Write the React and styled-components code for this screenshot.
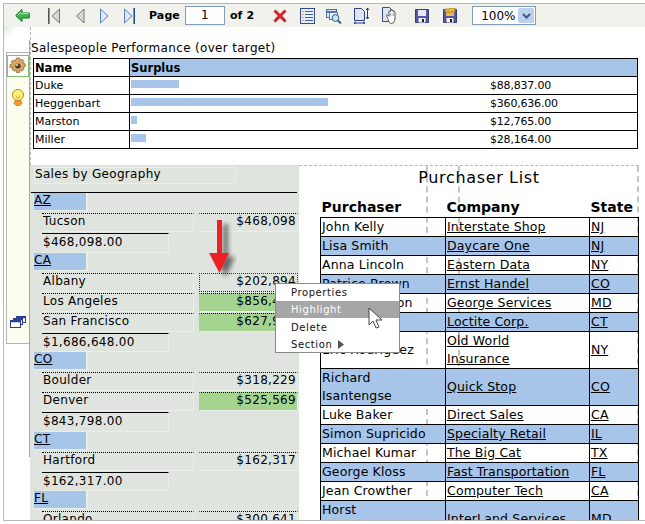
import React from 'react'
import styled, { createGlobalStyle } from 'styled-components'

const GlobalStyle = createGlobalStyle`
  html, body { margin: 0; padding: 0; background: #fff; }
  body { font-family: "DejaVu Sans", Verdana, sans-serif; font-size: 12px; color: #000; }
`

const blue = '#a6c5e8'

const Frame = styled.div`
  position: relative;
  box-sizing: border-box;
  width: 642px;
  height: 518px;
  margin: 3px 0 0 3px;
  border-top: 1px solid #b8b8b8;
  border-bottom: 1px solid #b8b8b8;
  border-left: 1px solid #b8b8b8;
  overflow: hidden;
`

const Toolbar = styled.div`
  display: flex;
  align-items: center;
  height: 23px;
  background: #f1f2ec;
`

const Tool = styled.svg`
  flex: none;
  margin-left: ${p => p.$ml}px;
`

const PageLabel = styled.span`
  font-weight: bold;
  font-size: 11px;
  letter-spacing: 0.1px;
  margin-left: ${p => p.$ml}px;
`

const PageInput = styled.div`
  box-sizing: border-box;
  width: 40px;
  height: 19px;
  margin-left: 5px;
  border: 1px solid #7f9db9;
  background: #fff;
  text-align: center;
  line-height: 17px;
  font-size: 12px;
`

const ZoomSelect = styled.div`
  box-sizing: border-box;
  display: flex;
  align-items: center;
  justify-content: space-between;
  width: 64px;
  height: 19px;
  margin-left: 15px;
  padding: 0 1px 0 8px;
  border: 1px solid #7f9db9;
  background: #fff;
  font-size: 12px;
`

const ZoomArrow = styled.span`
  display: flex;
  align-items: center;
  justify-content: center;
  width: 16px;
  height: 15px;
  border-radius: 2px;
  background: #bdd0ec;
`

const Body = styled.div`
  display: flex;
  align-items: flex-start;
  background: linear-gradient(135deg, #dcead6 0, #fff 10px) no-repeat 0 0 / 12px 12px;
`

const Rail = styled.div`
  box-sizing: border-box;
  flex: none;
  width: 26px;
  height: 417px;
  margin-top: 13px;
  padding: 12px 0 0 2px;
  border-right: 1px solid #a8a8a8;
`

const Sidebar = styled.div`
  box-sizing: border-box;
  display: flex;
  flex-direction: column;
  align-items: center;
  width: 23px;
  height: 292px;
  padding-top: 2px;
  background: #fdfdf0;
  border: 1px solid #b4b4b4;
  border-right: none;
`

const SideButton = styled.div`
  box-sizing: border-box;
  display: flex;
  align-items: center;
  justify-content: center;
  width: 22px;
  height: 22px;
  margin-top: ${p => p.$mt || 0}px;
  border: ${p => (p.$active ? '1px solid #7fc06a' : 'none')};
  background: ${p => (p.$active ? '#fff' : 'transparent')};
`

const Report = styled.div`
  flex: 1;
  min-width: 0;
`

const Perf = styled.section`
  box-sizing: border-box;
  height: 138px;
  padding-top: 13px;
  border-left: 1px dashed #b8b8b8;
`

const PerfTitle = styled.div`
  height: 18px;
  line-height: 16px;
  font-size: 12px;
  letter-spacing: 0.32px;
`

const PerfTable = styled.table`
  width: 605px;
  margin-left: 2px;
  border-collapse: collapse;
  table-layout: fixed;
  font-size: 11px;
  & th, & td {
    height: 17px;
    padding: 0 1px;
    border: 1px solid #000;
    text-align: left;
    line-height: 14px;
  }
  & th {
    font-size: 11.5px;
  }
`

const SurplusHead = styled.th`
  background: ${blue};
`

const SurplusCell = styled.div`
  display: flex;
  align-items: flex-start;
  height: 17px;
`

const BarTrack = styled.div`
  width: 359px;
  flex: none;
  padding-top: 3px;
`

const Bar = styled.div`
  height: 8px;
  background: ${blue};
`

const Amount = styled.span`
  line-height: 17px;
  letter-spacing: -0.2px;
`

const Lower = styled.div`
  display: flex;
  align-items: flex-start;
`

const Geo = styled.section`
  box-sizing: border-box;
  flex: none;
  width: 269px;
  height: 356px;
  padding-top: 1px;
  background: #dfe5de;
  border-top: 1px solid #ddd;
  letter-spacing: 0.3px;
  overflow: hidden;
`

const GeoTitle = styled.div`
  box-sizing: border-box;
  width: 202px;
  height: 17px;
  margin-left: 4px;
  border: 1px solid #eaeee8;
  line-height: 13px;
  font-size: 12px;
`

const GeoRule = styled.div`
  height: 1px;
  margin: 8px 2px 0 1px;
  background: #000;
`

const StateBox = styled.div`
  box-sizing: border-box;
  width: 54px;
  height: 18px;
  margin: 0 0 2px 4px;
  border-right: 2px solid #eaeee8;
  border-bottom: 1px solid #eaeee8;
  background: ${blue};
  line-height: 15px;
  text-decoration: underline;
  font-size: 12px;
`

const CityRow = styled.div`
  display: flex;
  height: 20px;
  margin-left: 12px;
`

const CityCell = styled.div`
  box-sizing: border-box;
  flex: none;
  width: 152px;
  height: 19px;
  padding-left: 1px;
  border-top: 1px dotted #000;
  border-right: 1px solid #eaeee8;
  border-bottom: 1px solid #eaeee8;
  line-height: 15px;
`

const ValueCell = styled.div`
  box-sizing: border-box;
  flex: none;
  width: 99px;
  height: 19px;
  margin-left: 5px;
  padding-right: 1px;
  text-align: right;
  line-height: 15px;
  border-top: 1px dotted ${p => (p.$marked ? '#7a1020' : '#000')};
  border-right: 1px ${p => (p.$marked ? 'dotted #7a1020' : 'solid #eaeee8')};
  border-left: 1px ${p => (p.$marked ? 'dotted #7a1020' : 'solid transparent')};
  border-bottom: 1px ${p => (p.$marked ? 'dotted #7a1020' : 'solid #eaeee8')};
  background: ${p => (p.$hot ? '#a5d490' : 'transparent')};
`

const TotalCell = styled.div`
  box-sizing: border-box;
  width: 127px;
  height: 19.5px;
  margin-left: 12px;
  padding-left: 1px;
  border-top: 1px solid #000;
  border-right: 1px solid #eaeee8;
  border-bottom: 1px solid #eaeee8;
  line-height: 16px;
`

const List = styled.section`
  position: relative;
  flex: none;
  width: 340px;
  height: 356px;
  border-top: 1px dashed #b8b8b8;
`

const Guide = styled.div`
  position: absolute;
  top: 0;
  left: ${p => p.$x}px;
  height: ${p => p.$h}px;
  border-left: 2px dashed #c4c4c4;
`

const ListTitle = styled.h2`
  position: relative;
  margin: 0;
  height: 25px;
  padding-left: 20px;
  font-size: 16px;
  font-weight: normal;
  letter-spacing: 0.65px;
  line-height: 24px;
  text-align: center;
`

const ListTable = styled.table`
  position: relative;
  width: 319px;
  margin-left: 21px;
  border-collapse: collapse;
  table-layout: fixed;
  font-size: 12.5px;
  letter-spacing: 0.15px;
  & th {
    height: 24px;
    padding: 0 1px 2px;
    font-size: 14px;
    letter-spacing: 0;
    text-align: left;
    vertical-align: bottom;
    line-height: 16px;
  }
  & td {
    padding: 0 1px;
    border: 1px solid #000;
    line-height: 18px;
  }
`

const ListRow = styled.tr`
  background: ${p => (p.$shade ? blue : 'transparent')};
`

const Linked = styled.a`
  color: #000;
  text-decoration: underline;
`

const Menu = styled.div`
  position: absolute;
  left: 271px;
  top: 279px;
  box-sizing: border-box;
  width: 125px;
  height: 70px;
  background: #fff;
  border: 1px solid #8a8a8a;
  font-size: 10px;
  letter-spacing: 0.6px;
`

const MenuItem = styled.div`
  display: flex;
  align-items: center;
  gap: 6px;
  height: 17px;
  margin-top: ${p => p.$mt || 0}px;
  padding-left: 15px;
  background: ${p => (p.$active ? '#a6a6a6' : 'transparent')};
  color: ${p => (p.$active ? '#fff' : '#111')};
`

const Overlay = styled.svg`
  position: absolute;
  left: ${p => p.$x}px;
  top: ${p => p.$y}px;
`

const BackIcon = () => (
  <Tool $ml={11} width="15" height="13" viewBox="0 0 15 13">
    <path d="M7 .5 .7 6.5 7 12.5V9h7.3V4H7z" fill="#3fb54a" stroke="#0f7a2a" />
    <path d="M6 3 2.600 6.400M6 4.600h7.600" stroke="#b4ecaa" fill="none" />
  </Tool>
)

const NavIcon = ({ ml, dir, bar, on }) => {
  const line = on ? '#5b82b8' : '#777'
  const fill = on ? '#dfeafa' : '#d8d8d8'
  const barColor = on ? '#1f4f96' : '#555'
  const tri = dir === 'left' ? 'M9 1 1.500 8 9 15z' : 'M1.500 1 9 8 1.500 15z'
  return (
    <Tool $ml={ml} width={bar ? 12 : 10} height="16" viewBox={bar ? '0 0 12 16' : '0 0 10 16'}>
      {bar && dir === 'left' && <rect x="0" y="0" width="1.600" height="16" fill={barColor} />}
      <g transform={bar && dir === 'left' ? 'translate(2.500 0)' : ''}>
        <path d={tri} fill={fill} stroke={line} />
      </g>
      {bar && dir === 'right' && <rect x="10.400" y="0" width="1.600" height="16" fill={barColor} />}
    </Tool>
  )
}

const CloseIcon = () => (
  <Tool $ml={19} width="14" height="14" viewBox="0 0 14 14">
    <path d="M1.500 1.500 12.500 12.500M12.500 1.500 1.500 12.500" stroke="#d8232a" strokeWidth="3" />
    <path d="M4 7.500 1.800 12.800M10 7.500 12.500 12.800" stroke="#8a2a2a" strokeWidth="1" opacity=".6" />
  </Tool>
)

const OutlineIcon = () => (
  <Tool $ml={13} width="15" height="16" viewBox="0 0 15 16">
    <rect x=".5" y=".5" width="14" height="15" fill="#e9effa" stroke="#2f4f9e" />
    <path d="M5 3.500h8M5 6.500h8M5 9.500h8M5 12.500h8" stroke="#3e62b0" />
    <path d="M2 3.500h1.500M2 6.500h1.500M2 9.500h1.500M2 12.500h1.500" stroke="#e2742b" />
  </Tool>
)

const SearchTableIcon = () => (
  <Tool $ml={11} width="16" height="16" viewBox="0 0 16 16">
    <rect x=".5" y="1.500" width="10" height="8" fill="#dfe8f5" stroke="#4a6da8" />
    <path d="M.5 4h10" stroke="#4a6da8" strokeWidth="2" />
    <rect x="3.500" y="4.500" width="8" height="7" fill="#eef3fb" stroke="#5c7fb6" />
    <circle cx="9.500" cy="10" r="3.400" fill="#cfe2f5" stroke="#2e5f90" />
    <path d="M12 12.500 15 15.500" stroke="#2e5f90" strokeWidth="2" />
  </Tool>
)

const PageSizeIcon = () => (
  <Tool $ml={12} width="16" height="16" viewBox="0 0 16 16">
    <path d="M.5 .5h7l3 3v9H.5z" fill="#dfe4f2" stroke="#2f3f8e" />
    <path d="M13.500 0v11M12 2l1.500-2L15 2M12 9l1.500 2L15 9M0 15h11M2 13.800 0 15l2 1.200M9 13.800 11 15l-2 1.200" fill="none" stroke="#2f3f8e" />
  </Tool>
)

const HandIcon = () => (
  <Tool $ml={12} width="16" height="17" viewBox="0 0 16 17">
    <path d="M.5 .5h7l3 3v11H.5z" fill="#dfe3f2" stroke="#3a4a8e" />
    <path d="M5.500 10.500 4.500 9c-.5-1 .8-1.500 1.500-.7l1 1V4.500c0-1 1.500-1 1.500 0V3.200c0-1 1.500-1 1.500 0v.8c0-1 1.500-1 1.500 0v1c.2-.8 1.500-.8 1.500.2V11c0 3-1.500 5.500-3.500 5.500H9c-1.500 0-2.800-3-3.500-6z" fill="#fff" stroke="#444" strokeWidth=".9" />
    <path d="M8.500 6v3M10 6v3M11.500 6v3" stroke="#888" strokeWidth=".6" />
  </Tool>
)

const SaveIcon = ({ ml, open }) => (
  <Tool $ml={ml} width="14" height="15" viewBox="0 0 14 15">
    <path d="M.5 1.500h13v13H.5z" fill="#5555a5" stroke="#3a3a7e" />
    <rect x="3" y="2" width="8" height="6" fill={open ? '#e6b84a' : '#e8e8f4'} />
    <rect x="3.500" y="10" width="7" height="4.500" fill="#f4f4f4" />
    <rect x="7" y="11" width="2" height="3" fill="#222" />
    {open && <path d="M2 4V1h4l1-1h5v4z" fill="#e8b93c" stroke="#9a7414" strokeWidth=".7" />}
  </Tool>
)

const GearIcon = () => (
  <svg width="18" height="18" viewBox="0 0 18 18">
    <path d="M7.500 1h3l.5 2.500 2-1.300 2 2-1.300 2 2.500.6v3l-2.500.5 1.300 2-2 2-2-1.300-.5 2.500h-3l-.5-2.500-2 1.300-2-2 1.300-2L1 10.500v-3l2.500-.6-1.300-2 2-2 2 1.300z" fill="#d8a860" stroke="#8a6a3a" strokeWidth=".8" />
    <circle cx="9" cy="9" r="2.600" fill="#4a4030" />
    <circle cx="8" cy="8" r="1" fill="#efe6c8" />
  </svg>
)

const BulbIcon = () => (
  <svg width="14" height="17" viewBox="0 0 14 17">
    <circle cx="7" cy="6" r="5.500" fill="#fcf27a" stroke="#b88a1a" />
    <path d="M5 6.500 6 9h2l1-2.500" fill="none" stroke="#c89a2a" strokeWidth=".8" />
    <path d="M4 11.500h6l1 3-2 2H5l-2-2z" fill="#f09a2a" stroke="#c0701a" strokeWidth=".6" />
  </svg>
)

const WindowsIcon = () => (
  <svg width="16" height="12" viewBox="0 0 16 12">
    <rect x="6.500" y=".5" width="9" height="6" fill="#fff" stroke="#2b3f96" />
    <rect x="3.500" y="2.500" width="9" height="6" fill="#fff" stroke="#2b3f96" />
    <rect x=".5" y="4.500" width="10" height="7" fill="#fff" stroke="#2b3f96" />
    <path d="M.5 5.500h10M3.500 3.500h9M6.500 1.500h9" stroke="#2b3f96" strokeWidth="1.500" />
  </svg>
)

const salespeople = [
  { name: 'Duke', bar: 48, amount: '$88,837.00' },
  { name: 'Heggenbart', bar: 197, amount: '$360,636.00' },
  { name: 'Marston', bar: 6, amount: '$12,765.00' },
  { name: 'Miller', bar: 15, amount: '$28,164.00' },
]

const states = [
  { code: 'AZ', total: '$468,098.00', cities: [{ name: 'Tucson', value: '$468,098' }] },
  {
    code: 'CA',
    total: '$1,686,648.00',
    cities: [
      { name: 'Albany', value: '$202,894', marked: true },
      { name: 'Los Angeles', value: '$856,400', hot: true },
      { name: 'San Francisco', value: '$627,954', hot: true },
    ],
  },
  {
    code: 'CO',
    total: '$843,798.00',
    cities: [
      { name: 'Boulder', value: '$318,229' },
      { name: 'Denver', value: '$525,569', hot: true },
    ],
  },
  { code: 'CT', total: '$162,317.00', cities: [{ name: 'Hartford', value: '$162,317' }] },
  { code: 'FL', cities: [{ name: 'Orlando', value: '$300,641' }] },
]

const purchasers = [
  [['John Kelly'], ['Interstate Shop'], 'NJ'],
  [['Lisa Smith'], ['Daycare One'], 'NJ'],
  [['Anna Lincoln'], ['Eastern Data'], 'NY'],
  [['Patrice Brown'], ['Ernst Handel'], 'CO'],
  [['Jim Thompson'], ['George Services'], 'MD'],
  [['Mary Chen'], ['Loctite Corp.'], 'CT'],
  [['Eric Rodriguez'], ['Old World', 'Insurance'], 'NY'],
  [['Richard', 'Isantengse'], ['Quick Stop'], 'CO'],
  [['Luke Baker'], ['Direct Sales'], 'CA'],
  [['Simon Supricido'], ['Specialty Retail'], 'IL'],
  [['Michael Kumar'], ['The Big Cat'], 'TX'],
  [['George Kloss'], ['Fast Transportation'], 'FL'],
  [['Jean Crowther'], ['Computer Tech'], 'CA'],
  [['Horst', 'Kluge'], ['InterLand Services'], 'MD'],
]

const lines = parts => parts.map((t, i) => (
  <React.Fragment key={t}>{i > 0 && <br />}{t}</React.Fragment>
))

export default function App() {
  return (
    <Frame>
      <GlobalStyle />
      <Toolbar>
        <BackIcon />
        <NavIcon ml={18} dir="left" bar />
        <NavIcon ml={15} dir="left" />
        <NavIcon ml={14} dir="right" on />
        <NavIcon ml={14} dir="right" bar on />
        <PageLabel $ml={14}>Page</PageLabel>
        <PageInput>1</PageInput>
        <PageLabel $ml={5}>of 2</PageLabel>
        <CloseIcon />
        <OutlineIcon />
        <SearchTableIcon />
        <PageSizeIcon />
        <HandIcon />
        <SaveIcon ml={17} />
        <SaveIcon ml={14} open />
        <ZoomSelect>
          100%
          <ZoomArrow>
            <svg width="9" height="6" viewBox="0 0 9 6">
              <path d="M1 1 4.500 4.500 8 1" fill="none" stroke="#3e5a8a" strokeWidth="2" />
            </svg>
          </ZoomArrow>
        </ZoomSelect>
      </Toolbar>
      <Body>
        <Rail>
          <Sidebar>
            <SideButton $active><GearIcon /></SideButton>
            <SideButton $mt={9}><BulbIcon /></SideButton>
            <SideButton $mt={203}><WindowsIcon /></SideButton>
          </Sidebar>
        </Rail>
        <Report>
          <Perf>
            <PerfTitle>Salespeople Performance (over target)</PerfTitle>
            <PerfTable>
              <colgroup>
                <col style={{ width: 96 }} />
                <col />
              </colgroup>
              <thead>
                <tr>
                  <th>Name</th>
                  <SurplusHead>Surplus</SurplusHead>
                </tr>
              </thead>
              <tbody>
                {salespeople.map(s => (
                  <tr key={s.name}>
                    <td>{s.name}</td>
                    <td>
                      <SurplusCell>
                        <BarTrack><Bar style={{ width: s.bar }} /></BarTrack>
                        <Amount>{s.amount}</Amount>
                      </SurplusCell>
                    </td>
                  </tr>
                ))}
              </tbody>
            </PerfTable>
          </Perf>
          <Lower>
            <Geo>
              <GeoTitle>Sales by Geography</GeoTitle>
              <GeoRule />
              {states.map(s => (
                <div key={s.code}>
                  <StateBox>{s.code}</StateBox>
                  {s.cities.map(c => (
                    <CityRow key={c.name}>
                      <CityCell>{c.name}</CityCell>
                      <ValueCell $hot={c.hot} $marked={c.marked}>{c.value}</ValueCell>
                    </CityRow>
                  ))}
                  {s.total && <TotalCell>{s.total}</TotalCell>}
                </div>
              ))}
            </Geo>
            <List>
              <Guide $x={127} $h={330} />
              <Guide $x={159} $h={200} />
              <Guide $x={338} $h={350} />
              <ListTitle>Purchaser List</ListTitle>
              <ListTable>
                <colgroup>
                  <col style={{ width: 125 }} />
                  <col style={{ width: 144 }} />
                  <col />
                </colgroup>
                <thead>
                  <tr>
                    <th>Purchaser</th>
                    <th>Company</th>
                    <th>State</th>
                  </tr>
                </thead>
                <tbody>
                  {purchasers.map(([name, company, state], i) => (
                    <ListRow key={name[0]} $shade={i % 2 === 1}>
                      <td>{lines(name)}</td>
                      <td><Linked>{lines(company)}</Linked></td>
                      <td><Linked>{state}</Linked></td>
                    </ListRow>
                  ))}
                </tbody>
              </ListTable>
            </List>
          </Lower>
        </Report>
      </Body>
      <Overlay $x={199} $y={212} width="40" height="70" viewBox="0 0 40 70">
        <defs>
          <filter id="arrowShadow" x="-40%" y="-20%" width="180%" height="140%">
            <feDropShadow dx="6" dy="4" stdDeviation="2.500" floodColor="#000" floodOpacity=".55" />
          </filter>
        </defs>
        <path d="M14 4h5v33h7L16.500 57 6 37h8z" fill="#ee2028" filter="url(#arrowShadow)" />
      </Overlay>
      <Menu>
        <MenuItem>Properties</MenuItem>
        <MenuItem $active>Highlight</MenuItem>
        <MenuItem $mt={1}>Delete</MenuItem>
        <MenuItem>
          Section
          <svg width="6" height="9" viewBox="0 0 6 9"><path d="M0 0 6 4.500 0 9z" fill="#555" /></svg>
        </MenuItem>
      </Menu>
      <Overlay $x={364} $y={303} width="16" height="23" viewBox="0 0 16 23">
        <path d="M1 1v17l4-4 3 7 3-1-3-7h6z" fill="#fff" stroke="#444" />
      </Overlay>
    </Frame>
  )
}
